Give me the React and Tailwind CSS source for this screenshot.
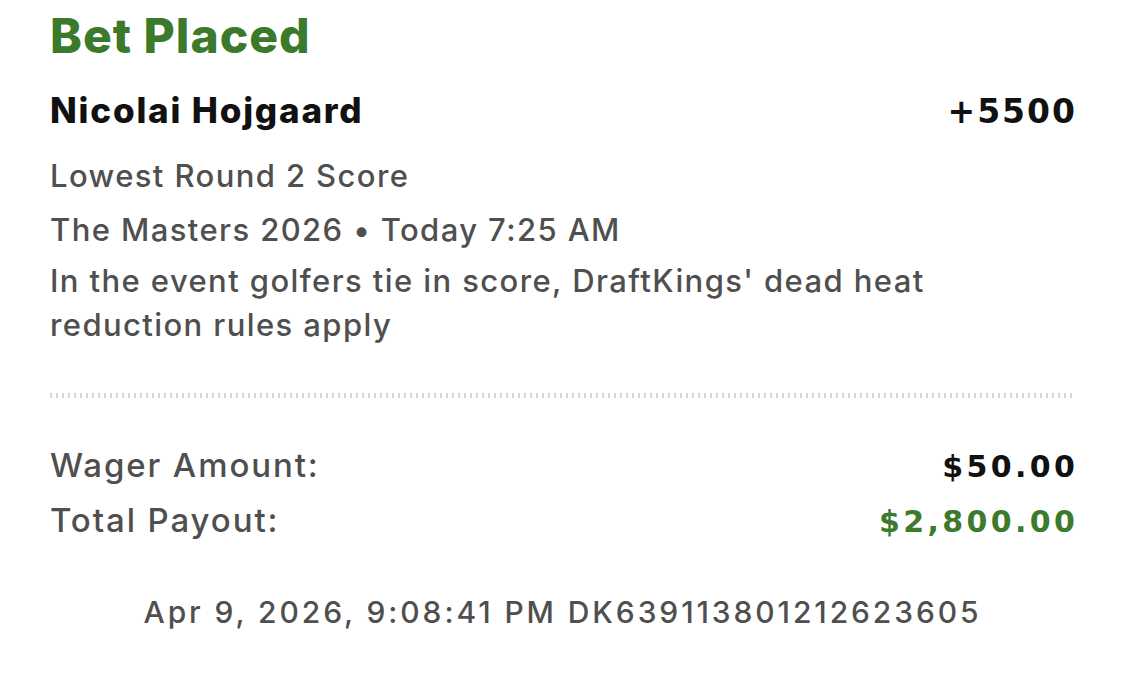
export default function App() {
  const sans = "font-['Inter',_'Noto_Sans',_sans-serif]";
  const heavy = "font-['DejaVu_Sans',_'Liberation_Sans',_sans-serif] font-bold";

  return (
    <div className={`w-[1125px] h-[693px] bg-white px-[50px] ${sans}`}>
      <h1 className="pt-[12px] text-[48px] leading-[48px] font-extrabold text-[#3b7a2b] tracking-[1px]">
        Bet Placed
      </h1>

      <div className="mt-[33px] flex items-baseline justify-between text-[#111]">
        <span className="text-[35px] leading-[35px] font-extrabold tracking-[1.8px]">Nicolai Hojgaard</span>
        <span className={`${heavy} text-[33px] leading-[35px] tracking-[2px] -mr-[2px]`}>+5500</span>
      </div>

      <div className="mt-[25px] text-[31px] leading-[44px] font-medium text-[#4f4f4f] tracking-[1.4px]">
        <p>Lowest Round 2 Score</p>
        <p className="mt-[10px]">The Masters 2026 • Today 7:25 AM</p>
        <p className="mt-[7px]">
          In the event golfers tie in score, DraftKings' dead heat
          <br />
          reduction rules apply
        </p>
      </div>

      <div className="mt-[46px] h-[5px] bg-[repeating-linear-gradient(90deg,#d7d7d7_0_2px,transparent_2px_6px)]" />

      <div className="mt-[45px] flex flex-col gap-[9px] text-[33px] leading-[44px] font-medium text-[#4f4f4f] tracking-[1.9px]">
        <div className="flex items-baseline justify-between">
          <span>Wager Amount:</span>
          <span className={`${heavy} text-[30px] tracking-[3.4px] -mr-[3.4px] text-[#111]`}>$50.00</span>
        </div>
        <div className="flex items-baseline justify-between">
          <span>Total Payout:</span>
          <span className={`${heavy} text-[30px] tracking-[3.4px] -mr-[3.4px] text-[#3c7a2d]`}>$2,800.00</span>
        </div>
      </div>

      <p className="mt-[46px] text-center text-[30px] leading-[44px] font-medium text-[#4f4f4f] tracking-[2.9px]">
        Apr 9, 2026, 9:08:41 PM DK639113801212623605
      </p>
    </div>
  );
}
